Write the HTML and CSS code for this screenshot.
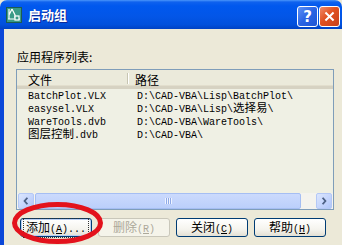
FILE: index.html
```html
<!DOCTYPE html>
<html lang="zh-CN">
<head>
    <meta charset="UTF-8">
    <title>启动组</title>
    <link rel="stylesheet" href="styles.css">
</head>
<body>
    <div class="window">
        <div class="titlebar">
            <svg class="app-icon" viewBox="0 0 16 16">
                <rect x="0.5" y="0.5" width="15" height="15" fill="#3a9a86" stroke="#1d5c50"/>
                <path d="M3 2 L3 12 M6 2 L3 8 M6 2 L9 8 L9 11 M2 12 L14 12" stroke="#fff" stroke-width="1.2" fill="none"/>
                <rect x="9" y="9" width="4" height="4" fill="#3a9a86" stroke="#fff" stroke-width="1.2"/>
            </svg>
            <span class="title">启动组</span>
            <div class="tb-buttons">
                <div class="tb-btn help">?</div>
                <div class="tb-btn close">
                    <svg viewBox="0 0 21 21">
                        <path d="M6 6 L15 15 M15 6 L6 15" stroke="#fff" stroke-width="2.2"/>
                    </svg>
                </div>
            </div>
        </div>

        <div class="client">
            <div class="label">应用程序列表:</div>

            <div class="listview">
                <div class="lv-header">
                    <div class="col-file">文件</div>
                    <div class="col-path">路径</div>
                </div>
                <div class="lv-rows">
                    <div class="lv-row">
                        <span class="c-file mono">BatchPlot.VLX</span>
                        <span class="c-path mono">D:\CAD-VBA\Lisp\BatchPlot\</span>
                    </div>
                    <div class="lv-row">
                        <span class="c-file mono">easysel.VLX</span>
                        <span class="c-path mono">D:\CAD-VBA\Lisp\<span class="cn">选择易</span>\</span>
                    </div>
                    <div class="lv-row">
                        <span class="c-file mono">WareTools.dvb</span>
                        <span class="c-path mono">D:\CAD-VBA\WareTools\</span>
                    </div>
                    <div class="lv-row">
                        <span class="c-file mono"><span class="cn">图层控制</span>.dvb</span>
                        <span class="c-path mono">D:\CAD-VBA\</span>
                    </div>
                </div>
                <div class="hscroll">
                    <div class="sb-arrow">
                        <svg viewBox="0 0 15 15"><path d="M9 4 L6 7.5 L9 11" stroke="#4d6185" stroke-width="2" fill="none"/></svg>
                    </div>
                    <div class="sb-thumb"><span class="grip"></span></div>
                    <div class="sb-arrow">
                        <svg viewBox="0 0 15 15"><path d="M6 4 L9 7.5 L6 11" stroke="#4d6185" stroke-width="2" fill="none"/></svg>
                    </div>
                </div>
            </div>

            <div class="buttons">
                <button class="btn default"><span class="focus">添加<span class="mono">(<u>A</u>)...</span></span></button>
                <button class="btn" disabled>删除<span class="mono">(<u>R</u>)</span></button>
                <button class="btn">关闭<span class="mono">(<u>C</u>)</span></button>
                <button class="btn">帮助<span class="mono">(<u>H</u>)</span></button>
            </div>
        </div>

        <svg class="marker" viewBox="0 0 342 245">
            <ellipse cx="57.5" cy="223" rx="43" ry="18.5" fill="none" stroke="#e3121c" stroke-width="5"/>
        </svg>
    </div>
</body>
</html>
```

FILE: styles.css
```css
body {
    margin: 0;
    background: #ece9d8;
    font-family: "Noto Sans CJK SC", "DejaVu Sans", sans-serif;
    font-size: 12px;
    color: #000;
}
.window {
    position: relative;
    width: 342px;
    height: 245px;
    overflow: hidden;
    background: #ece9d8;
}
.titlebar {
    height: 29px;
    display: flex;
    align-items: flex-start;
    padding-left: 6px;
    border-radius: 7px 7px 0 0;
    background: linear-gradient(to bottom, #4a96fb 0, #0f62ee 2px, #0058ee 6px, #0356e8 55%, #0150dc 85%, #0042c4 100%);
}
.app-icon {
    width: 16px;
    height: 16px;
    margin-top: 7px;
}
.title {
    margin-left: 6px;
    margin-top: 5px;
    color: #fff;
    font-weight: bold;
    font-size: 13px;
    line-height: 19px;
    text-shadow: 1px 1px #0c2a99;
}
.tb-buttons {
    margin-left: auto;
    margin-top: 6px;
    margin-right: 2px;
    display: flex;
    gap: 1px;
}
.tb-btn {
    width: 19px;
    height: 19px;
    border: 1px solid #fff;
    border-radius: 3px;
    display: flex;
    align-items: center;
    justify-content: center;
    color: #fff;
    font: bold 15px "DejaVu Sans", sans-serif;
}
.tb-btn.help {
    background: linear-gradient(135deg, #5e92f6 0, #2a64e4 50%, #1f55d4 100%);
}
.tb-btn.close {
    background: linear-gradient(135deg, #f08a6a 0, #e0501f 45%, #c9401a 100%);
}
.tb-btn svg {
    width: 19px;
    height: 19px;
}
.client {
    height: 216px;
    border-left: 4px solid #0b47d8;
    padding: 21px 0 0 12px;
    box-sizing: border-box;
}
.label {
    margin-left: 1px;
    line-height: 14px;
}
.listview {
    margin-top: 5px;
    width: 318px;
    height: 141px;
    box-sizing: border-box;
    border: 1px solid #7f9db9;
    background: #eff0e4;
    display: flex;
    flex-direction: column;
}
.lv-header {
    display: flex;
    height: 15px;
    line-height: 17px;
    background: #ebeadb;
    border-bottom: 3px solid #d6d2c2;
    box-shadow: 0 -1px 0 #e2decd inset;
    padding-top: 1px;
}
.col-file {
    width: 99px;
    padding-left: 11px;
    border-right: 1px solid #c7c5b2;
    box-shadow: 1px 0 0 #fff;
    margin: 2px 0;
    line-height: 13px;
}
.col-path {
    padding-left: 7px;
}
.lv-rows {
    padding-top: 1px;
}
.lv-row {
    display: flex;
    height: 13px;
    line-height: 13px;
}
.mono {
    font-family: "Liberation Mono", "Noto Sans CJK SC", monospace;
    font-size: 10px;
}
.cn {
    font-family: "Noto Sans CJK SC", sans-serif;
    font-size: 11.5px;
    line-height: 1px;
}
.c-file {
    width: 109px;
    padding-left: 11px;
}
.hscroll {
    margin-top: auto;
    height: 16px;
    display: flex;
    align-items: center;
    padding: 0 1px;
    background: #f4f3ee;
}
.sb-arrow {
    width: 14px;
    height: 14px;
    border: 1px solid #b4c8f6;
    border-radius: 2px;
    background: linear-gradient(135deg, #dbe6fe 0, #c2d3fc 60%, #b0c6f8 100%);
}
.sb-arrow svg {
    width: 14px;
    height: 14px;
    display: block;
}
.sb-thumb {
    flex: 1;
    height: 14px;
    margin: 0 15px 0 1px;
    border: 1px solid #a5bef3;
    border-radius: 2px;
    background: linear-gradient(to bottom, #cbdafd 0, #bbcffb 100%);
    display: flex;
    align-items: center;
    justify-content: center;
}
.grip {
    width: 7px;
    height: 6px;
    background: repeating-linear-gradient(to right, #eef3ff 0, #eef3ff 1px, #8faae6 1px, #8faae6 2px);
}
.buttons {
    display: flex;
    gap: 6px;
    margin-top: 8px;
    margin-left: 4px;
}
.btn {
    width: 72px;
    height: 19px;
    padding: 0;
    border: 1px solid #003c74;
    border-radius: 3px;
    background: linear-gradient(to bottom, #ffffff 0, #f5f4ee 60%, #e3e0d4 100%);
    font-family: "Noto Sans CJK SC", sans-serif;
    font-size: 12px;
    line-height: 15px;
    color: #000;
}
.btn.default {
    box-shadow: inset 0 0 0 1px #b9cff5;
}
.btn .focus {
    display: inline-block;
    outline: 1px dotted #333;
    padding: 0 2px;
}
.btn:disabled {
    border-color: #c9c7ba;
    background: #f5f4ea;
    color: #aca899;
}
.marker {
    position: absolute;
    left: 0;
    top: 0;
    width: 342px;
    height: 245px;
    pointer-events: none;
}
```
